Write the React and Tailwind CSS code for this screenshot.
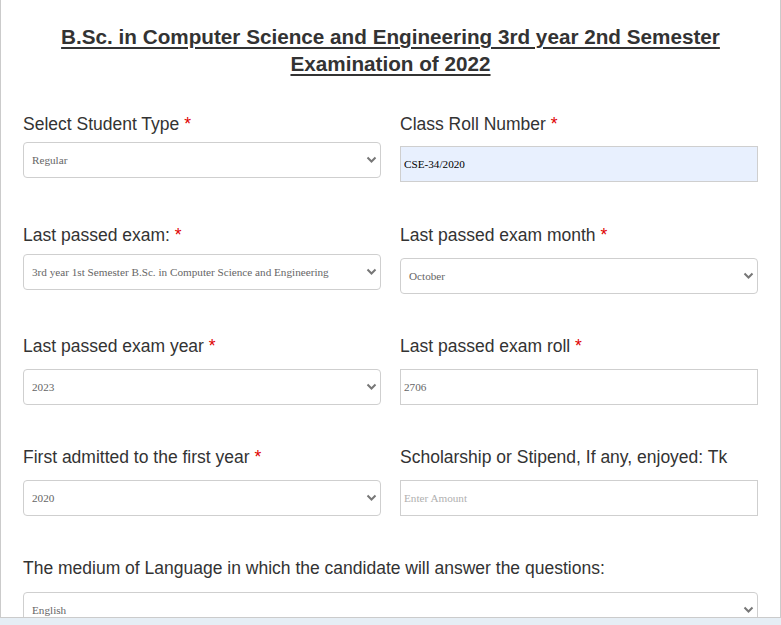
import React from 'react';

const Chevron = () => (
    <svg width="11" height="8" viewBox="0 0 11 8" className="shrink-0">
        <polyline points="1.5,1.5 5.5,5.5 9.5,1.5" fill="none" stroke="#777" strokeWidth="2" />
    </svg>
);

const Label = ({ text, required }) => (
    <div className="text-[17.5px] leading-[20px] text-[#333] whitespace-nowrap">
        {text}
        {required && <span className="text-[#e00000]"> *</span>}
    </div>
);

const Select = ({ value, mt }) => (
    <div className={`${mt} flex h-[36px] items-center justify-between rounded-[4px] border border-[#cfcfcf] bg-white pl-[8px] pr-[3px]`}>
        <span className="font-['Liberation_Serif',serif] text-[11.2px] text-[#666]">{value}</span>
        <Chevron />
    </div>
);

const Input = ({ value, placeholder, mt, filled, dark }) => (
    <input
        readOnly
        value={value}
        placeholder={placeholder}
        className={`${mt} block h-[36px] w-full border border-[#cfcfcf] pl-[3px] font-['Liberation_Serif',serif] text-[11.2px] outline-none placeholder:text-[#b0b0b0] ${filled ? 'bg-[#e8f0fe]' : 'bg-white'} ${dark ? 'text-black' : 'text-[#666]'}`}
    />
);

const App = () => {
    return (
        <div className="h-[625px] overflow-hidden bg-[#e6eef5] font-['Liberation_Sans',Arial,sans-serif]">
            <div className="h-[618px] overflow-hidden border-x border-b border-[#cbcbcb] bg-white px-[22px]">
                <h1 className="pt-[23px] text-center text-[20.7px] font-bold leading-[27px] text-[#333] underline underline-offset-[3px]">
                    B.Sc. in Computer Science and Engineering 3rd year 2nd Semester
                    <br />
                    Examination of 2022
                </h1>

                <div className="mt-[37px] grid grid-cols-2 gap-x-[19px]">
                    <div className="h-[111px]">
                        <Label text="Select Student Type" required />
                        <Select value="Regular" mt="mt-[8px]" />
                    </div>
                    <div className="h-[111px]">
                        <Label text="Class Roll Number" required />
                        <Input value="CSE-34/2020" mt="mt-[12px]" filled dark />
                    </div>

                    <div className="h-[111px]">
                        <Label text="Last passed exam:" required />
                        <Select value="3rd year 1st Semester B.Sc. in Computer Science and Engineering" mt="mt-[9px]" />
                    </div>
                    <div className="h-[111px]">
                        <Label text="Last passed exam month" required />
                        <Select value="October" mt="mt-[13px]" />
                    </div>

                    <div className="h-[111px]">
                        <Label text="Last passed exam year" required />
                        <Select value="2023" mt="mt-[13px]" />
                    </div>
                    <div className="h-[111px]">
                        <Label text="Last passed exam roll" required />
                        <Input value="2706" mt="mt-[13px]" />
                    </div>

                    <div className="h-[111px]">
                        <Label text="First admitted to the first year" required />
                        <Select value="2020" mt="mt-[13px]" />
                    </div>
                    <div className="h-[111px]">
                        <Label text="Scholarship or Stipend, If any, enjoyed: Tk" />
                        <Input value="" placeholder="Enter Amount" mt="mt-[13px]" />
                    </div>

                    <div className="col-span-2">
                        <Label text="The medium of Language in which the candidate will answer the questions:" />
                        <Select value="English" mt="mt-[14px]" />
                    </div>
                </div>
            </div>
        </div>
    );
};

export default App;
